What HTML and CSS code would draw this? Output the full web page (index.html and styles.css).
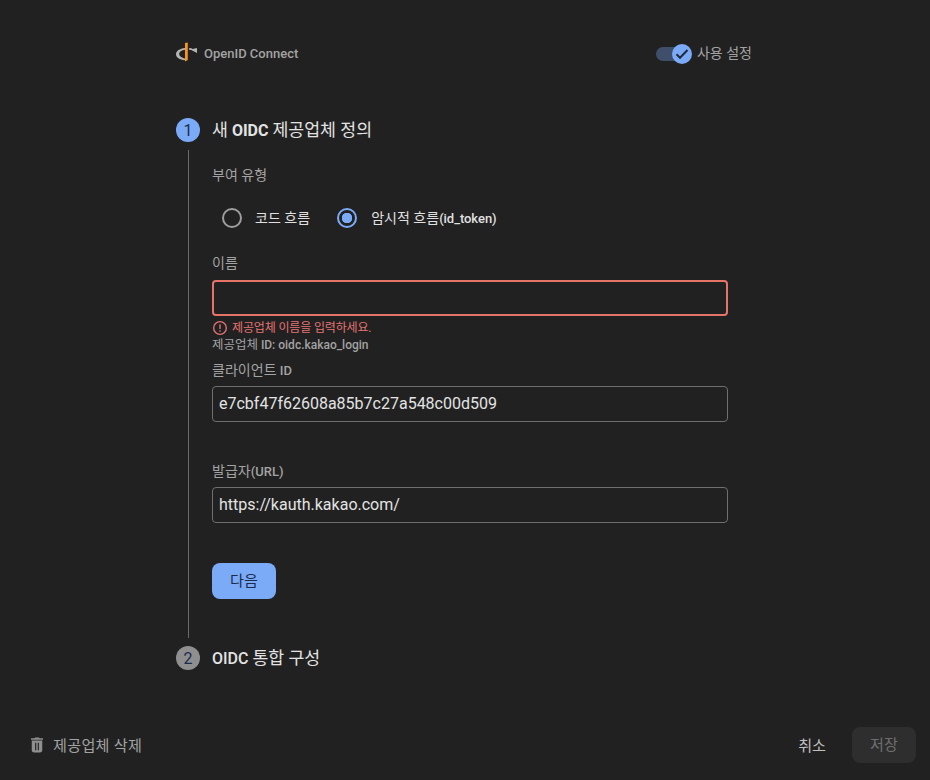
FILE: index.html
```html
<!DOCTYPE html>
<html lang="ko">
<head>
<meta charset="utf-8">
<title>OpenID Connect</title>
<link rel="stylesheet" href="styles.css">
</head>
<body>
<div class="page">
  <main class="content">
    <header class="head">
      <div class="brand">
        <svg class="brand-logo" width="22" height="20" viewBox="0 0 22 20">
          <path d="M9 4C3.600 4.600 0 7 0 10.200c0 3.100 3.600 5.500 9 6v-1.700c-3.300-.5-5.800-2.200-5.800-4.400 0-2.200 2.500-3.900 5.800-4.300z" fill="#b4b4b4"/>
          <path d="M9 -1l2.800-.5v17.500L9 17.500z" fill="#f7931e"/>
          <path d="M13 4.400l1-.4c.9.200 1.800.5 2.600.9L21 4v5l-5.800-2.900-2.200-.3z" fill="#b4b4b4"/>
        </svg>
        <span class="brand-name">OpenID Connect</span>
      </div>
      <div class="enable">
        <span class="switch">
          <span class="switch-track"></span>
          <span class="switch-thumb">
            <svg width="14" height="12" viewBox="0 0 14 12"><path d="M1.500 6.300L5 9.800 12.500 2" fill="none" stroke="#202a3a" stroke-width="2"/></svg>
          </span>
        </span>
        <span class="enable-text"><span class="ko">사용 설정</span></span>
      </div>
    </header>

    <section class="step step-one">
      <div class="step-head">
        <span class="step-num active">1</span>
        <h2><span class="ko">새</span> <b>OIDC</b> <span class="ko">제공업체 정의</span></h2>
      </div>
      <div class="step-body">
        <div class="label"><span class="ko">부여 유형</span></div>
        <div class="radios">
          <div class="radio"><span class="dot"></span><span class="ko">코드 흐름</span></div>
          <div class="radio on"><span class="dot"></span><span><span class="ko">암시적 흐름</span><span class="latin token">(id_token)</span></span></div>
        </div>
        <div class="label name-label"><span class="ko">이름</span></div>
        <div class="input error"></div>
        <div class="msg">
          <svg width="16" height="16" viewBox="0 0 24 24"><circle cx="12" cy="12" r="9.500" fill="none" stroke="#e57373" stroke-width="2"/><path d="M11 6.500h2v7h-2zM11 15.500h2v2h-2z" fill="#e57373"/></svg>
          <span>제공업체 이름을 입력하세요.</span>
        </div>
        <div class="hint"><span class="ko-tight">제공업체</span> <span class="latin">ID: oidc.kakao_login</span></div>
        <div class="label client-label"><span class="ko">클라이언트</span> <span class="latin">ID</span></div>
        <div class="input">e7cbf47f62608a85b7c27a548c00d509</div>
        <div class="label issuer-label"><span class="ko">발급자</span><span class="latin">(URL)</span></div>
        <div class="input">https://kauth.kakao.com/</div>
        <button class="next" type="button"><span class="ko">다음</span></button>
      </div>
    </section>

    <section class="step">
      <div class="step-head">
        <span class="step-num">2</span>
        <h2><span class="latin">OIDC</span> <span class="ko">통합 구성</span></h2>
      </div>
    </section>
  </main>

  <footer class="foot">
    <div class="delete">
      <svg width="18" height="18" viewBox="0 0 24 24"><path d="M15.500 3l-1-1h-5l-1 1H4v2h16V3zM5 6v13c0 1.700 1.300 3 3 3h8c1.700 0 3-1.300 3-3V6zm4.500 3h1.500v10H9.500zm3.500 0h1.500v10H13z" fill="#8f8f8f"/></svg>
      <span class="delete-text"><span class="ko">제공업체 삭제</span></span>
    </div>
    <div class="actions">
      <span class="cancel"><span class="ko">취소</span></span>
      <span class="save"><span class="ko">저장</span></span>
    </div>
  </footer>
</div>
</body>
</html>
```
FILE: styles.css
```css
* { box-sizing: border-box; }
html, body { margin: 0; height: 100%; }
body {
  background: #212121;
  color: #e0e0e0;
  font-family: Roboto, "Noto Sans CJK KR", sans-serif;
  font-size: 14px;
}
.ko { font-size: 1.08em; font-weight: 400; line-height: 1; }
.ko-tight { font-size: 1.04em; font-weight: 400; }
.latin { font-weight: 500; }
.page {
  width: 930px;
  height: 780px;
  display: flex;
  flex-direction: column;
  justify-content: space-between;
  overflow: hidden;
}
.content {
  width: 576px;
  margin-left: 176px;
  padding-top: 44px;
}
.head {
  height: 20px;
  display: flex;
  justify-content: space-between;
  align-items: center;
  color: #a3a3a3;
  font-size: 13px;
}
.brand {
  display: flex;
  align-items: center;
  gap: 6px;
  font-size: 13px;
  font-weight: 500;
}
.brand-name { margin-bottom: 2px; }
.brand-logo { display: block; overflow: visible; }
.enable { display: flex; align-items: center; gap: 5px; font-size: 13px; }
.enable-text { margin-bottom: 2px; }
.switch {
  position: relative;
  width: 36px;
  height: 20px;
  display: block;
}
.switch-track {
  display: block;
  width: 30px;
  height: 14px;
  margin-top: 3px;
  border-radius: 7px;
  background: #3f4f6b;
}
.switch-thumb {
  position: absolute;
  right: 0;
  top: 0;
  width: 20px;
  height: 20px;
  border-radius: 50%;
  background: #7baaf7;
  display: flex;
  align-items: center;
  justify-content: center;
}
.step-one { margin-top: 54px; }
.step-head {
  display: flex;
  align-items: center;
  gap: 12px;
  height: 24px;
}
.step-head h2 {
  margin: 0;
  font-size: 16px;
  font-weight: 500;
  color: #e3e3e3;
}
.step-head b { font-weight: 700; }
.step-num {
  width: 24px;
  height: 24px;
  border-radius: 50%;
  background: #8f8f8f;
  color: #1c2c4c;
  display: flex;
  align-items: center;
  justify-content: center;
  font-size: 16px;
}
.step-num.active { background: #7baaf7; }
.step-body {
  margin: 8px 0 8px 12px;
  height: 488px;
  border-left: 1px solid #6b6b6b;
  padding-left: 23px;
  padding-top: 17px;
  width: 540px;
}
.label {
  font-size: 13px;
  line-height: 18px;
  color: #a3a3a3;
}
.radios {
  display: flex;
  margin-top: 21px;
  height: 24px;
  align-items: center;
  padding-left: 10px;
  gap: 27px;
  font-size: 13px;
  color: #e0e0e0;
}
.radio { display: flex; align-items: center; gap: 13px; }
.radio.on { gap: 14px; }
.token { letter-spacing: -0.05px; }
.dot {
  width: 20px;
  height: 20px;
  border-radius: 50%;
  border: 2px solid #9e9e9e;
  display: block;
}
.radio.on .dot {
  border-color: #7baaf7;
  background: radial-gradient(circle, #7baaf7 0 5px, transparent 5.500px);
}
.name-label { margin-top: 25px; }
.input {
  width: 516px;
  height: 36px;
  margin-top: 6px;
  border: 1px solid #6f6f6f;
  border-radius: 4px;
  padding: 0 6px 2px;
  display: flex;
  align-items: center;
  font-size: 16px;
  color: #e3e3e3;
}
.input.error { border: 2px solid #e57368; margin-top: 7px; }
.msg {
  display: flex;
  align-items: center;
  gap: 4px;
  margin-top: 4px;
  height: 16px;
  font-size: 12px;
  line-height: 16px;
  color: #e57373;
  letter-spacing: -0.15px;
}
.hint {
  margin-top: 1px;
  font-size: 12px;
  line-height: 16px;
  color: #a3a3a3;
}
.client-label { margin-top: 9px; }
.issuer-label { margin-top: 41px; }
.next {
  display: block;
  width: 64px;
  height: 36px;
  margin-top: 40px;
  border: 0;
  padding: 0;
  border-radius: 8px;
  background: #7baaf7;
  color: #1c2c4c;
  font-family: inherit;
  font-size: 14px;
}
.foot {
  height: 70px;
  padding: 0 14px 17px 28px;
  display: flex;
  justify-content: space-between;
  align-items: flex-end;
}
.delete {
  display: flex;
  align-items: center;
  gap: 7px;
  height: 36px;
  color: #a3a3a3;
}
.delete-text { padding-top: 2px; letter-spacing: 0.3px; }
.actions { display: flex; align-items: center; gap: 26px; }
.cancel { color: #c0c0c0; padding-top: 2px; }
.save {
  width: 64px;
  height: 36px;
  padding-top: 2px;
  border-radius: 8px;
  background: #2e2e2e;
  color: #6f6f6f;
  display: flex;
  align-items: center;
  justify-content: center;
}
```
